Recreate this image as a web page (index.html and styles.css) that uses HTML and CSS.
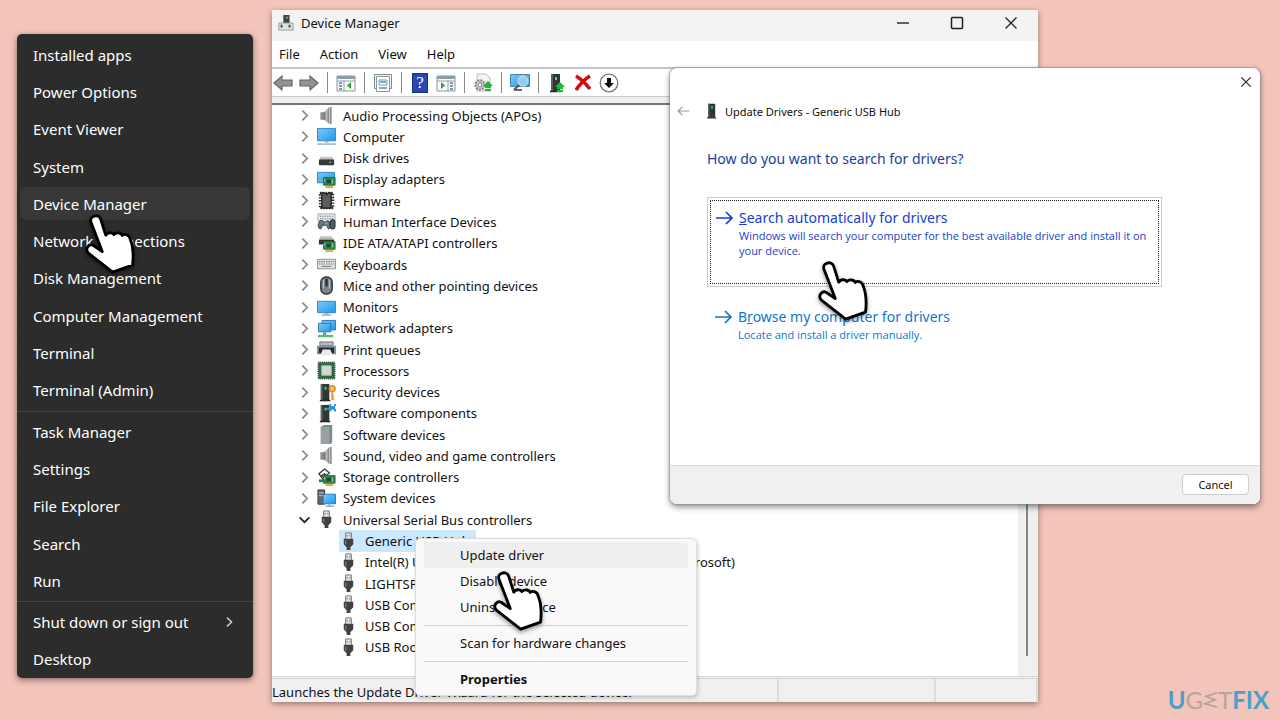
FILE: index.html
```html
<!DOCTYPE html>
<html lang="en">
<head>
<meta charset="utf-8">
<title>Update Drivers - Generic USB Hub</title>
<link rel="stylesheet" href="styles.css">
</head>
<body>
<svg class="sprite" aria-hidden="true">
  <defs>
    <linearGradient id="screen" x1="0" y1="0" x2="1" y2="1"><stop offset="0" stop-color="#7cc8fa"/><stop offset="1" stop-color="#209ae6"/></linearGradient>
    <linearGradient id="metal"><stop offset="0" stop-color="#636669"/><stop offset=".5" stop-color="#b9bcbf"/><stop offset="1" stop-color="#777b7f"/></linearGradient>
    <linearGradient id="drive" x1="0" y1="0" x2="0" y2="1"><stop offset="0" stop-color="#d8d8d8"/><stop offset="1" stop-color="#a8a8a8"/></linearGradient>
  </defs>
  <symbol id="audio" viewBox="0 0 20 20"><path d="M4 7h4v7H4z" fill="#8d9194" stroke="#6b6f72" stroke-width=".6"/><path d="M7 7l6-6v18l-6-5z" fill="url(#metal)"/><path d="M14.500 1v18" stroke="#8f9396" stroke-width="2"/></symbol>
  <symbol id="computer" viewBox="0 0 20 20"><path d="M.5 1.500h19v13H.5z" fill="url(#screen)" stroke="#3386c2"/><path d="M8 15h4v1.500H8z" fill="#8fb5cf"/><path d="M0 18h20" stroke="#9db0bf" stroke-width="1.500"/></symbol>
  <symbol id="disk" viewBox="0 0 20 20"><path d="M4 8h12l2 4H2z" fill="url(#drive)"/><rect x="2" y="11" width="16" height="6" rx="1" fill="#35393b"/><path d="M13 14h2" stroke="#3fe04c" stroke-width="1.500"/></symbol>
  <symbol id="card" viewBox="0 0 20 20"><path d="M7 8h12v8H7z" fill="#2f9150" stroke="#21663a"/><path d="M10 10h5v4h-5z" fill="#1d4934"/><path d="M16 10v4M8 10v2" stroke="#b7deb5" stroke-width="1"/><path d="M9 17h8v2H9z" fill="#e8a72c"/></symbol>
  <symbol id="display" viewBox="0 0 20 20"><path d="M.5 2.500h18v11H.5z" fill="url(#screen)" stroke="#3386c2"/><use href="#card"/></symbol>
  <symbol id="firmware" viewBox="0 0 20 20"><path d="M3 2h14v16H3z" fill="none" stroke="#252525" stroke-width="2.200" stroke-dasharray="1.500 1.500"/><path d="M5 2h3l2 2 2-2h3v16H5z" fill="#5b5b5b" stroke="#171717" stroke-width="1.300"/></symbol>
  <symbol id="hid" viewBox="0 0 20 20"><path d="M1 2h18v8H1z" fill="#e7e9ea" stroke="#a8adb0"/><path d="M3 4.500h14M3 7h14" stroke="#808587" stroke-dasharray="1.500 1"/><path d="M2 17L1 14l2-5h3l2 2 3-2 2 1 1 7-2 1-2-4H6l-2 4z" fill="#6e7477" stroke="#424648"/><rect x="14" y="8" width="5" height="10" rx="2.500" fill="#47606d" stroke="#222"/><circle cx="10" cy="12" r="1.300" fill="#45b9ed"/></symbol>
  <symbol id="ide" viewBox="0 0 20 20"><path d="M4 2h11l3 4H2z" fill="url(#drive)"/><path d="M2 6h16v5H2z" fill="#333"/><use href="#card"/></symbol>
  <symbol id="keyboard" viewBox="0 0 20 20"><path d="M.5 4.500h19v10H.5z" fill="#dfe1e2" stroke="#8b8f91"/><path d="M2 7h16M2 9.500h16" stroke="#74787a" stroke-width="1.200" stroke-dasharray="1.500 1"/><path d="M5 12h10" stroke="#74787a"/></symbol>
  <symbol id="mouse" viewBox="0 0 20 20"><rect x="4" y="1" width="12" height="18" rx="5.500" fill="#7b858b" stroke="#303638" stroke-width="1.500"/><path d="M7 4v9M13 4v9" stroke="#c3ccd1"/><path d="M10 3v8" stroke="#22292d" stroke-width="2.400"/></symbol>
  <symbol id="monitor" viewBox="0 0 20 20"><path d="M.5 3.500h19v12H.5z" fill="url(#screen)" stroke="#3386c2"/><path d="M8 16h4v1H8z" fill="#6e9dbd"/><path d="M5 18h10" stroke="#8eacc1" stroke-width="1.500"/></symbol>
  <symbol id="network" viewBox="0 0 20 20"><path d="M5.500 1.500h14v10h-14z" fill="url(#screen)" stroke="#2b78b1"/><path d="M1.500 4.500h13v9h-13z" fill="url(#screen)" stroke="#2b78b1"/><path d="M8 14v3" stroke="#45a564" stroke-width="3"/><path d="M1 18h16" stroke="#54bf75" stroke-width="2.500"/></symbol>
  <symbol id="printer" viewBox="0 0 20 20"><path d="M3 2h14v4H3z" fill="#b5babd" stroke="#73797c"/><path d="M0 6h20v9H0z" fill="#8b9296"/><path d="M2 8h16v6H2z" fill="#262a2c"/><path d="M6 10h8l2 5H4z" fill="#e8edf0"/></symbol>
  <symbol id="cpu" viewBox="0 0 20 20"><path d="M1.500 1.500h17v17h-17z" fill="#2f6846" stroke="#264f38" stroke-width="2" stroke-dasharray="1 1"/><path d="M2 2h16v16H2z" fill="#306844"/><path d="M5 5h10v10H5z" fill="#d4d8d5" stroke="#b5bcb7"/></symbol>
  <symbol id="tower" viewBox="0 0 20 20"><path d="M4 1h9v17H4z" fill="#303633"/><path d="M4 1h2v17H4z" fill="#5b605e"/><path d="M8 4h2v3H8z" fill="#49dc61"/><path d="M3 18.500h11" stroke="#222" stroke-width="1.500"/></symbol>
  <symbol id="security" viewBox="0 0 20 20"><use href="#tower"/><circle cx="16" cy="6" r="3" fill="#f3c568" stroke="#d28d20" stroke-width="1.600"/><path d="M16 9v9m0-4h2m-2 3h2" stroke="#dfa036" stroke-width="2"/></symbol>
  <symbol id="components" viewBox="0 0 20 20"><use href="#tower"/><path d="M13 0h2v2h3V0h2v2h-1v3h1v3h-2V6h-3v2h-2V6h-3V4h3z" fill="#3194d8"/></symbol>
  <symbol id="software" viewBox="0 0 20 20"><path d="M4 2l3-2h9v17l-1 3H4z" fill="#81878b"/><path d="M4 2h9v18H4z" fill="#9a9fa3"/><path d="M9 5h2v2H9z" fill="#68c7bd"/></symbol>
  <symbol id="storage" viewBox="0 0 20 20"><path d="M2 6l6-5 5 4-3 3-2-2-3 2 4 3-2 2z" fill="#f5f5f5" stroke="#303332" stroke-width="1.300"/><use href="#card"/><path d="M2 12h5v3H2z" fill="#2d8450"/></symbol>
  <symbol id="system" viewBox="0 0 20 20"><path d="M1 1h7v15H1z" fill="#65696b" stroke="#383b3d"/><path d="M2 4h5M2 7h5" stroke="#c5cbce"/><path d="M6.500 5.500h13v10h-13z" fill="url(#screen)" stroke="#2b78b1"/><path d="M9 18h9M13 15v3" stroke="#71a7ca" stroke-width="1.500"/></symbol>
  <symbol id="usb" viewBox="0 0 20 20"><path d="M7 1h6v7H7z" fill="#e1e1e1" stroke="#777"/><path d="M8 4h1m2 0h1" stroke="#333"/><path d="M5 7h10v6l-3 3v3H8v-3l-3-3z" fill="#424242"/><path d="M7 9v4" stroke="#777" stroke-width="1.500"/></symbol>
  <symbol id="chevron" viewBox="0 0 12 12"><path d="M4 1.500L8.500 6 4 10.500" fill="none" stroke="currentColor" stroke-width="1.600"/></symbol>
  <symbol id="up" viewBox="0 0 10 10"><path d="M5 0l5 5H8v2H2V5H0z" fill="#22b837"/><path d="M2 8h6v2H2z" fill="#22b837"/></symbol>
  <symbol id="tool-arrow" viewBox="0 0 20 20"><path d="M1 10l8-7v4h10v6H9v4z" fill="#929292" stroke="#666" stroke-width="1.200"/></symbol>
  <symbol id="panel" viewBox="0 0 20 20"><path d="M1 3h18v15H1z" fill="#f7f9fa" stroke="#8b989f"/><path d="M1 3h18v3H1z" fill="#8a9da9"/><path d="M8 7v11M1 8h18" stroke="#99a3a8"/><path d="M3 10h3M3 13h3M3 16h3" stroke="#4c83a5" stroke-width="1.400"/><path d="M15 9v7l-4-3.500z" fill="#2ca629"/></symbol>
  <symbol id="long-arrow" viewBox="0 0 20 16"><path d="M1 8h16M11 2l6 6-6 6" fill="none" stroke="currentColor" stroke-width="1.700"/></symbol>
  <symbol id="close" viewBox="0 0 14 14"><path d="M1.500 1.500l11 11m0-11l-11 11" stroke="#202020" stroke-width="1.300"/></symbol>
  <symbol id="hand" viewBox="-6 -4 168 196"><path d="M19 24C13 4 44-3 50 15l16 51c6-10 22-10 26-2 8-8 24-6 26 3 8-7 24-3 26 13 8 20 12 40 7 81l-63 22-76-59c-14-14 0-32 14-26l29 20z" fill="#fff" stroke="#000" stroke-width="9" stroke-linejoin="round"/></symbol>
</svg>

<main class="desktop">
  <nav class="power-menu" aria-label="Quick links">
    <button>Installed apps</button>
    <button>Power Options</button>
    <button>Event Viewer</button>
    <button>System</button>
    <button class="active">Device Manager</button>
    <button>Network Connections</button>
    <button>Disk Management</button>
    <button>Computer Management</button>
    <button>Terminal</button>
    <button>Terminal (Admin)</button>
    <hr>
    <button>Task Manager</button>
    <button>Settings</button>
    <button>File Explorer</button>
    <button>Search</button>
    <button>Run</button>
    <hr>
    <button>Shut down or sign out<svg class="submenu"><use href="#chevron"/></svg></button>
    <button>Desktop</button>
  </nav>

  <section class="manager" aria-label="Device Manager">
    <header class="titlebar">
      <svg class="app-icon" viewBox="0 0 18 20"><path d="M6 1h7v9H6z" fill="#3e4544"/><path d="M9 3h2v2H9z" fill="#82b99a"/><path d="M1 10h16v8H1z" fill="#dedfe0" stroke="#92979b"/><path d="M4 12v3m9-3v3" stroke="#323b42" stroke-width="2"/></svg>
      <h1>Device Manager</h1>
      <div class="controls">
        <button aria-label="Minimize"><svg viewBox="0 0 14 14"><path d="M1 7h12" stroke="#202020" stroke-width="1.400"/></svg></button>
        <button aria-label="Maximize"><svg viewBox="0 0 14 14"><rect x="1.500" y="1.500" width="11" height="11" rx="1" fill="none" stroke="#202020" stroke-width="1.500"/></svg></button>
        <button aria-label="Close"><svg><use href="#close"/></svg></button>
      </div>
    </header>
    <nav class="menubar" aria-label="Menu bar"><button>File</button><button>Action</button><button>View</button><button>Help</button></nav>
    <div class="toolbar">
      <button aria-label="Back"><svg><use href="#tool-arrow"/></svg></button>
      <button aria-label="Forward"><svg class="flip"><use href="#tool-arrow"/></svg></button>
      <i></i>
      <button aria-label="Show console tree"><svg><use href="#panel"/></svg></button>
      <i></i>
      <button aria-label="Properties"><svg viewBox="0 0 20 20"><path d="M1.500 1.500h17v14h-17z" fill="#f4f6f7" stroke="#7e898e"/><path d="M3.500 3.500h13v15h-13z" fill="#fff" stroke="#8a989f"/><path d="M6 7h8v5H6z" fill="none" stroke="#6f9bb0"/><path d="M7 9h6M6 15h8" stroke="#5b91a9" stroke-width="1.300"/></svg></button>
      <i></i>
      <button class="help" aria-label="Help">?</button>
      <button aria-label="Action pane"><svg class="flip"><use href="#panel"/></svg></button>
      <i></i>
      <button aria-label="Update"><svg viewBox="0 0 20 20"><path d="M4 1h9l4 4v13H4z" fill="#f4f4f4" stroke="#bbb"/><circle cx="7" cy="12" r="4.500" fill="#ddd" stroke="#8a8a8a" stroke-width="2.500" stroke-dasharray="2 1"/><circle cx="7" cy="12" r="2" fill="#fff" stroke="#777"/><use href="#up" x="10" y="8" width="10" height="10"/></svg></button>
      <i></i>
      <button aria-label="Scan for hardware changes"><svg viewBox="0 0 20 20"><path d="M.5 1.500h19v12H.5z" fill="url(#screen)" stroke="#5085a4"/><path d="M4 17h8" stroke="#566e7a" stroke-width="2"/><circle cx="13" cy="8" r="5" fill="#8fcff0" stroke="#b9d9e8" stroke-width="1.300"/><path d="M9 12l-5 5" stroke="#555" stroke-width="2"/></svg></button>
      <i></i>
      <button aria-label="Update driver"><svg viewBox="0 0 20 20"><use href="#tower"/><use href="#up" x="8" y="9" width="10" height="10"/></svg></button>
      <button aria-label="Uninstall device"><svg viewBox="0 0 20 20"><path d="M3 3c5 3 10 8 14 13M17 3C12 6 7 11 3 17" fill="none" stroke="#d20b12" stroke-width="3.500"/></svg></button>
      <button aria-label="Disable device"><svg viewBox="0 0 20 20"><circle cx="10" cy="10" r="8.800" fill="#fff" stroke="#777" stroke-width="1.300"/><path d="M8 5h4v5h3l-5 5-5-5h3z" fill="#111"/></svg></button>
    </div>
    <div class="content">
      <ul class="tree">
        <li><svg class="toggle"><use href="#chevron"/></svg><svg><use href="#audio"/></svg><span>Audio Processing Objects (APOs)</span></li>
        <li><svg class="toggle"><use href="#chevron"/></svg><svg><use href="#computer"/></svg><span>Computer</span></li>
        <li><svg class="toggle"><use href="#chevron"/></svg><svg><use href="#disk"/></svg><span>Disk drives</span></li>
        <li><svg class="toggle"><use href="#chevron"/></svg><svg><use href="#display"/></svg><span>Display adapters</span></li>
        <li><svg class="toggle"><use href="#chevron"/></svg><svg><use href="#firmware"/></svg><span>Firmware</span></li>
        <li><svg class="toggle"><use href="#chevron"/></svg><svg><use href="#hid"/></svg><span>Human Interface Devices</span></li>
        <li><svg class="toggle"><use href="#chevron"/></svg><svg><use href="#ide"/></svg><span>IDE ATA/ATAPI controllers</span></li>
        <li><svg class="toggle"><use href="#chevron"/></svg><svg><use href="#keyboard"/></svg><span>Keyboards</span></li>
        <li><svg class="toggle"><use href="#chevron"/></svg><svg><use href="#mouse"/></svg><span>Mice and other pointing devices</span></li>
        <li><svg class="toggle"><use href="#chevron"/></svg><svg><use href="#monitor"/></svg><span>Monitors</span></li>
        <li><svg class="toggle"><use href="#chevron"/></svg><svg><use href="#network"/></svg><span>Network adapters</span></li>
        <li><svg class="toggle"><use href="#chevron"/></svg><svg><use href="#printer"/></svg><span>Print queues</span></li>
        <li><svg class="toggle"><use href="#chevron"/></svg><svg><use href="#cpu"/></svg><span>Processors</span></li>
        <li><svg class="toggle"><use href="#chevron"/></svg><svg><use href="#security"/></svg><span>Security devices</span></li>
        <li><svg class="toggle"><use href="#chevron"/></svg><svg><use href="#components"/></svg><span>Software components</span></li>
        <li><svg class="toggle"><use href="#chevron"/></svg><svg><use href="#software"/></svg><span>Software devices</span></li>
        <li><svg class="toggle"><use href="#chevron"/></svg><svg><use href="#audio"/></svg><span>Sound, video and game controllers</span></li>
        <li><svg class="toggle"><use href="#chevron"/></svg><svg><use href="#storage"/></svg><span>Storage controllers</span></li>
        <li><svg class="toggle"><use href="#chevron"/></svg><svg><use href="#system"/></svg><span>System devices</span></li>
        <li><svg class="toggle open"><use href="#chevron"/></svg><svg><use href="#usb"/></svg><span>Universal Serial Bus controllers</span></li>
        <li class="device selected"><svg><use href="#usb"/></svg><span>Generic USB Hub</span></li>
        <li class="device"><svg><use href="#usb"/></svg><span>Intel(R) USB 3.10 eXtensible Host Controller - 1.10 (Microsoft)</span></li>
        <li class="device"><svg><use href="#usb"/></svg><span>LIGHTSPEED Receiver</span></li>
        <li class="device"><svg><use href="#usb"/></svg><span>USB Composite Device</span></li>
        <li class="device"><svg><use href="#usb"/></svg><span>USB Composite Device</span></li>
        <li class="device"><svg><use href="#usb"/></svg><span>USB Root Hub (USB 3.0)</span></li>
      </ul>
      <div class="scrollbar"><div class="thumb"></div></div>
    </div>
    <footer class="status"><span>Launches the Update Driver Wizard for the selected device.</span><span></span><span></span></footer>
  </section>

  <menu class="context">
    <li><button class="active">Update driver</button></li>
    <li><button>Disable device</button></li>
    <li><button>Uninstall device</button></li>
    <li class="group"><button>Scan for hardware changes</button></li>
    <li class="group"><button class="default">Properties</button></li>
  </menu>

  <section class="wizard" role="dialog" aria-labelledby="wizard-title">
    <button class="wizard-close" aria-label="Close"><svg><use href="#close"/></svg></button>
    <header class="wizard-head">
      <button class="back" aria-label="Back"><svg class="flip"><use href="#long-arrow"/></svg></button>
      <svg class="wizard-icon" viewBox="3 0 12 20"><use href="#tower" width="20" height="20"/></svg>
      <h2 id="wizard-title">Update Drivers - Generic USB Hub</h2>
    </header>
    <div class="wizard-body">
      <h3>How do you want to search for drivers?</h3>
      <button class="option search"><span class="focus"><svg><use href="#long-arrow"/></svg><span class="copy"><span class="option-title"><u>S</u>earch automatically for drivers</span><span class="detail">Windows will search your computer for the best available driver and install it on your device.</span></span></span></button>
      <button class="option browse"><span class="focus"><svg><use href="#long-arrow"/></svg><span class="copy"><span class="option-title">B<u>r</u>owse my computer for drivers</span><span class="detail">Locate and install a driver manually.</span></span></span></button>
    </div>
    <footer class="wizard-foot"><button>Cancel</button></footer>
  </section>

  <svg class="hand hand-menu"><use href="#hand"/></svg>
  <svg class="hand hand-context"><use href="#hand"/></svg>
  <svg class="hand hand-wizard"><use href="#hand"/></svg>
  <div class="brand"><b>U</b><span>G</span><svg viewBox="0 0 16 20"><path d="M15 2L3 6l10 4-11 4 13 4" fill="none" stroke="currentColor" stroke-width="2"/></svg><span>T</span><b>FIX</b></div>
</main>
</body>
</html>
```
FILE: styles.css
```css
* { box-sizing: border-box; }
body { margin: 0; font-family: "Noto Sans", "Open Sans", sans-serif; color: #111; }
button { font: inherit; color: inherit; border: 0; background: none; padding: 0; text-align: left; }
svg { flex: none; width: 20px; height: 20px; }
h1, h2, h3, ul, menu { margin: 0; padding: 0; font-weight: 400; list-style: none; }
.sprite { position: absolute; width: 0; height: 0; }
.flip { transform: scaleX(-1); }
.desktop { position: relative; min-height: 100vh; overflow: hidden; background: #f3c4ba; }

.power-menu { position: absolute; left: 17px; top: 34px; bottom: 42px; width: 236px; padding-top: 2px; display: flex; flex-direction: column; border-radius: 5px; background: #2c2c2c; color: #fff; font-size: 15px; box-shadow: 0 2px 6px #0007; }
.power-menu button { flex: 1; display: flex; align-items: center; justify-content: space-between; margin: 0 3px; padding: 0 15px 0 13px; border: 2px solid #2c2c2c; border-width: 2px 0; border-radius: 7px; }
.power-menu .active { background: #383838; }
.power-menu hr { width: 100%; height: 1px; margin: 2px 0 1px; border: 0; background: #454545; }
.submenu { width: 12px; height: 12px; color: #ccc; }

.manager { position: absolute; left: 272px; right: 242px; top: 10px; bottom: 18px; display: flex; flex-direction: column; overflow: hidden; background: #fff; font-size: 13px; box-shadow: 0 2px 6px #0006; }
.titlebar { display: flex; align-items: center; height: 31px; padding: 0 0 5px 6px; background: #f3f3f3; }
.app-icon { width: 16px; height: 20px; margin-right: 7px; }
.titlebar h1 { flex: 1; font-size: 13px; line-height: 20px; }
.controls { display: flex; }
.controls button { display: grid; place-items: center; width: 54px; }
.controls svg { width: 14px; height: 14px; }
.menubar { display: flex; align-items: center; gap: 20px; height: 28px; padding-left: 7px; border-bottom: 2px solid #c3c5c8; }
.toolbar { display: flex; align-items: center; height: 28px; margin-left: -2px; border-bottom: 1px solid #ccc; }
.toolbar button { display: grid; place-items: center; width: 26px; }
.toolbar i { width: 1px; height: 21px; margin: 0 5px; background: #858585; }
.toolbar .help { width: 16px; height: 20px; margin: 0 5px; background: #2746ae; border: 1px solid #17307f; color: #fff; font: 17px/18px "Liberation Serif", serif; text-align: center; }
.content { flex: 1; display: flex; min-height: 0; border-top: 6px solid #f0f0f0; }
.tree { flex: 1; display: grid; grid-auto-rows: 1fr; min-width: 0; padding: 0 0 18px 26px; border-top: 2px solid #777; }
.tree li { display: flex; align-items: center; min-height: 0; white-space: nowrap; line-height: 20px; }
.tree svg { width: 19px; height: 19px; margin-right: 7px; }
.tree .toggle { width: 13px; height: 13px; margin-right: 6px; color: #888; }
.tree .open { color: #222; transform: rotate(90deg); }
.tree .device { justify-self: start; margin-left: 41px; }
.tree .selected { background: #cce8ff; padding-right: 6px; }
.scrollbar { width: 20px; padding: 50px 9px 20px 8px; background: #f0f0f0; }
.thumb { height: 100%; width: 2px; background: #858585; }
.status { display: flex; height: 26px; border-top: 3px double #d5d5d5; background: #f0f0f0; white-space: nowrap; line-height: 26px; }
.status span { flex: 0 0 157px; border-right: 2px solid #ddd; }
.status span:first-child { flex: 1; }
.status span:last-child { flex-basis: 102px; }

.context { position: absolute; left: 415px; top: 538px; width: 282px; padding: 3px 8px; border: 1px solid #ddd; border-radius: 5px; background: #f9f9f9; font-size: 13px; box-shadow: 1px 2px 4px #0003; }
.context button { width: 100%; height: 26px; padding-left: 36px; border-radius: 4px; line-height: 24px; }
.context .active { background: #efefef; }
.context .group { margin-top: 5px; padding-top: 4px; border-top: 1px solid #d0d0d0; }
.context .default { font-weight: 700; }

.wizard { position: absolute; left: 670px; right: 20px; top: 68px; display: flex; flex-direction: column; overflow: hidden; border-radius: 7px; background: #fff; font-size: 11px; box-shadow: 0 0 1px 1px #8888, 0 3px 6px #0007; }
.wizard-close { align-self: flex-end; display: grid; place-items: center; width: 28px; height: 27px; }
.wizard-close svg { width: 12px; height: 12px; }
.wizard-head { display: flex; align-items: center; height: 32px; padding-left: 6px; }
.back { display: grid; color: #999; }
.back svg { width: 14px; height: 12px; }
.wizard-icon { width: 10px; height: 16px; margin: 0 8px 0 17px; }
.wizard-head h2 { font-size: 11px; }
.wizard-body { padding: 20px 98px 114px 37px; }
.wizard-body h3 { margin-bottom: 26px; color: #1b409d; font-size: 14px; line-height: 24px; }
.option { display: block; width: 100%; }
.search { height: 90px; padding: 2px; border: 1px solid #ccc; color: #153fce; }
.browse { height: 54px; margin-top: 10px; padding: 3px; color: #0f76cf; }
.focus { display: flex; height: 100%; padding: 6px 4px; }
.search .focus { border: 1px dotted #222; }
.focus svg { width: 20px; height: 16px; margin: 3px 4px 0 0; }
.option-title { display: block; font-size: 14px; line-height: 21px; }
.detail { display: block; font-family: "Open Sans", sans-serif; font-size: 11px; font-weight: 500; line-height: 15px; }
.wizard-foot { display: flex; justify-content: flex-end; padding: 8px 11px 9px; border-top: 1px solid #ddd; background: #f0f0f0; }
.wizard-foot button { width: 67px; height: 21px; border: 1px solid #ccc; border-radius: 4px; background: #fff; text-align: center; line-height: 18px; }

.hand { position: absolute; width: 53px; height: 62px; filter: drop-shadow(0 2px 2px #0006); }
.hand-menu { left: 83px; top: 213px; }
.hand-context { left: 491px; top: 570px; }
.hand-wizard { left: 816px; top: 260px; }
.brand { position: absolute; right: 11px; bottom: 6px; display: flex; align-items: center; color: #b9a39c; font: 24px/28px Lato, sans-serif; }
.brand b { color: #4b9fc9; font-weight: 700; }
.brand svg { width: 15px; height: 18px; }
```
